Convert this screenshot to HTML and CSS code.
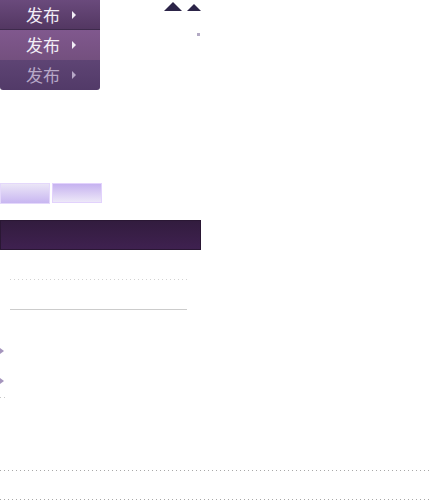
FILE: index.html
```html
<!DOCTYPE html>
<html>
<head>
<meta charset="utf-8">
<link rel="stylesheet" href="styles.css">
</head>
<body>
<div class="top">
  <div class="btns">
    <div class="btn b1"><span class="lbl">发布</span><span class="caret"></span></div>
    <div class="btn b2"><span class="lbl">发布</span><span class="caret"></span></div>
    <div class="btn b3"><span class="lbl">发布</span><span class="caret"></span></div>
  </div>
  <div class="side">
    <div class="tris">
      <span class="tri big"></span>
      <span class="tri small"></span>
    </div>
    <span class="sq"></span>
  </div>
</div>
<div class="tabs">
  <div class="tab t1"></div>
  <div class="tab t2"></div>
</div>
<div class="bar"></div>
<div class="dots-line"></div>
<div class="solid-line"></div>
<div class="arrows">
  <span class="arr"></span>
  <span class="arr"></span>
  <span class="pip"></span>
</div>
<div class="foot">
  <div class="fdots"></div>
  <div class="fdots"></div>
</div>
</body>
</html>
```
FILE: styles.css
```css
html, body { margin: 0; padding: 0; background: #fff; }
body { width: 429px; height: 500px; overflow: hidden; font-family: "Noto Sans CJK SC", "Noto Sans", sans-serif; }

.top { display: flex; height: 90px; }
.btns { display: flex; flex-direction: column; width: 100px; }
.btn {
  height: 30px; display: flex; align-items: center; gap: 12px;
  box-sizing: border-box; padding-left: 26px;
}
.b1 { background: linear-gradient(#6a4a7c, #533762); border-bottom: 1px solid #3e2a4c; }
.b2 { background: linear-gradient(#80588e, #74507f); }
.b3 { background: linear-gradient(#5e4474, #523a68); border-radius: 0 0 3px 3px; }
.lbl { font-size: 17px; line-height: 20px; color: #f2eef6; }
.b3 .lbl { color: #b7a8c7; }
.caret { width: 0; height: 0; border-left: 4px solid #f2eef6; border-top: 4px solid transparent; border-bottom: 4px solid transparent; }
.b3 .caret { border-left-color: #b7a8c7; }

.side { margin-left: 63px; display: flex; flex-direction: column; align-items: flex-end; width: 38px; }
.tris { display: flex; align-items: flex-end; gap: 5px; margin-top: 2px; height: 9px; }
.tri { width: 0; height: 0; border-left: 9px solid transparent; border-right: 9px solid transparent; border-bottom: 9px solid #2c2448; }
.tri.small { border-left-width: 7px; border-right-width: 7px; border-bottom-width: 7px; }
.sq { width: 3px; height: 3px; background: #b3aac4; margin-top: 22px; margin-right: 1px; }

.tabs { display: flex; gap: 2px; margin-top: 93px; height: 21px; align-items: flex-start; }
.tab { box-sizing: border-box; width: 50px; }
.t1 { height: 21px; background: linear-gradient(#ebe6f7, #c8b6f1); border: 1px solid #e4d8fb; }
.t2 { height: 20px; background: linear-gradient(#c6b2f0, #ede8f8); border: 1px solid #e2d2fd; }

.bar { margin-top: 16px; width: 201px; height: 30px; box-sizing: border-box; background: linear-gradient(#321c3e, #3f2150); border: 1px solid #2a1734; }

.dots-line { margin: 29px 0 0 10px; width: 177px; height: 1px; background: repeating-linear-gradient(to right, #d2d2d2 0 1px, transparent 1px 4px); }
.solid-line { margin: 29px 0 0 10px; width: 177px; height: 1px; background: #cccccc; }

.arrows { display: flex; flex-direction: column; align-items: flex-start; margin-top: 38px; }
.arr { width: 0; height: 0; border-left: 4px solid #a595bd; border-top: 3px solid transparent; border-bottom: 3px solid transparent; margin-bottom: 24px; }
.pip { width: 6px; height: 1px; margin-top: -11px; background: repeating-linear-gradient(to right, #c8c8c8 0 1px, transparent 1px 4px); }

.foot { margin-top: 72px; display: flex; flex-direction: column; gap: 28px; }
.fdots { width: 429px; height: 1px; background: repeating-linear-gradient(to right, #a8a8a8 0 1px, transparent 1px 4px); }
```
